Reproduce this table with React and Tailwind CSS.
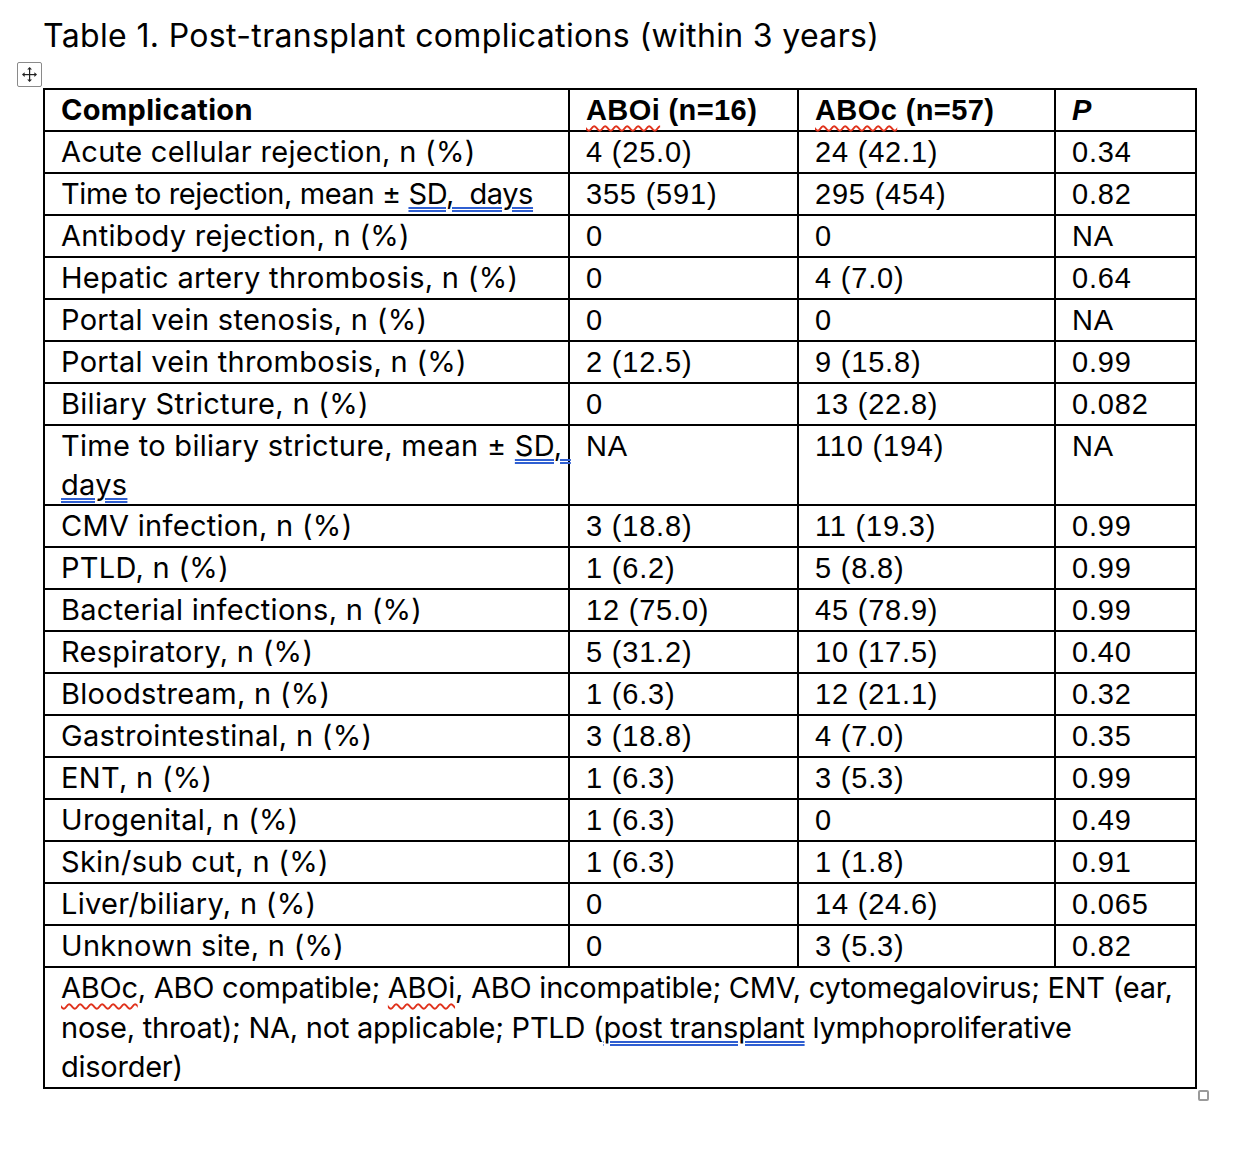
import React from 'react'

const blue = 'underline decoration-double decoration-[#2f5fd1] decoration-2 underline-offset-[3px]'
const squiggle = 'underline decoration-wavy decoration-[#e0321c] decoration-[1.5px] underline-offset-[5px]'

const rows = [
  ['Acute cellular rejection, n (%)', '4 (25.0)', '24 (42.1)', '0.34'],
  [<span className="whitespace-nowrap tracking-[-0.4px]">Time to rejection, mean ± <span className={blue}>SD,&nbsp; days</span></span>, '355 (591)', '295 (454)', '0.82'],
  ['Antibody rejection, n (%)', '0', '0', 'NA'],
  ['Hepatic artery thrombosis, n (%)', '0', '4 (7.0)', '0.64'],
  ['Portal vein stenosis, n (%)', '0', '0', 'NA'],
  ['Portal vein thrombosis, n (%)', '2 (12.5)', '9 (15.8)', '0.99'],
  ['Biliary Stricture, n (%)', '0', '13 (22.8)', '0.082'],
  [<div className="leading-[39px]"><span className="whitespace-nowrap">Time to biliary stricture, mean ± <span className={blue}>SD,&nbsp;</span></span><br /><span className={blue}>days</span></div>, 'NA', '110 (194)', 'NA'],
  ['CMV infection, n (%)', '3 (18.8)', '11 (19.3)', '0.99'],
  ['PTLD, n (%)', '1 (6.2)', '5 (8.8)', '0.99'],
  ['Bacterial infections, n (%)', '12 (75.0)', '45 (78.9)', '0.99'],
  ['Respiratory, n (%)', '5 (31.2)', '10 (17.5)', '0.40'],
  ['Bloodstream, n (%)', '1 (6.3)', '12 (21.1)', '0.32'],
  ['Gastrointestinal, n (%)', '3 (18.8)', '4 (7.0)', '0.35'],
  ['ENT, n (%)', '1 (6.3)', '3 (5.3)', '0.99'],
  ['Urogenital, n (%)', '1 (6.3)', '0', '0.49'],
  ['Skin/sub cut, n (%)', '1 (6.3)', '1 (1.8)', '0.91'],
  ['Liver/biliary, n (%)', '0', '14 (24.6)', '0.065'],
  ['Unknown site, n (%)', '0', '3 (5.3)', '0.82'],
]

function MoveHandle(){
  return (
    <div className="absolute left-[17px] top-[62px] w-[25px] h-[25px] border border-[#8a8a8a] rounded-[2px] bg-white flex items-center justify-center">
      <svg width="17" height="17" viewBox="0 0 17 17" fill="#222">
        <rect x="8" y="3" width="1.2" height="11" />
        <rect x="3" y="8" width="11" height="1.2" />
        <path d="M8.6 1 L11 3.6 L6.2 3.6 Z" />
        <path d="M8.6 16 L11 13.4 L6.2 13.4 Z" />
        <path d="M1 8.6 L3.6 6.2 L3.6 11 Z" />
        <path d="M16 8.6 L13.4 6.2 L13.4 11 Z" />
      </svg>
    </div>
  )
}

export default function App(){
  const cell = 'border-2 border-black px-[16px] py-0 align-top'
  const lab = "font-['Inter',sans-serif] text-[29px] tracking-[0.3px]"
  const num = "font-['Liberation_Sans',Arial,sans-serif] text-[29px]"
  return (
    <div className="relative w-[1260px] h-[1164px] bg-white text-black">
      <div className="font-['Inter',sans-serif] absolute left-[43px] top-[14px] text-[32px] tracking-[0.35px] leading-[44px]">
        Table 1. Post-transplant complications (within 3 years)
      </div>
      <MoveHandle />
      <div className="pt-[88px] pl-[43px]">
        <table className="border-collapse table-fixed w-[1152px] leading-[40px]">
          <colgroup>
            <col className="w-[525px]" />
            <col className="w-[229px]" />
            <col className="w-[257px]" />
            <col className="w-[141px]" />
          </colgroup>
          <thead>
            <tr>
              <th className={`${cell} ${lab} text-left font-bold`}>Complication</th>
              <th className={`${cell} ${num} text-left font-bold tracking-[0.4px]`}><span className={squiggle}>ABOi</span> (n=16)</th>
              <th className={`${cell} ${num} text-left font-bold tracking-[0.4px]`}><span className={squiggle}>ABOc</span> (n=57)</th>
              <th className={`${cell} ${num} text-left font-bold italic`}>P</th>
            </tr>
          </thead>
          <tbody>
            {rows.map((r, i) => (
              <tr key={i}>
                <td className={`${cell} ${lab} pr-[2px]`}>{r[0]}</td>
                <td className={`${cell} ${num} tracking-[0.8px]`}>{r[1]}</td>
                <td className={`${cell} ${num} tracking-[0.8px]`}>{r[2]}</td>
                <td className={`${cell} ${num} tracking-[0.8px]`}>{r[3]}</td>
              </tr>
            ))}
            <tr>
              <td colSpan={4} className={`${cell} font-['Inter',sans-serif] text-[29px] leading-[39.5px] tracking-[-0.25px] whitespace-nowrap`}>
                <span className={squiggle}>ABOc</span>, ABO compatible; <span className={squiggle}>ABOi</span>, ABO incompatible; CMV, cytomegalovirus; ENT (ear,<br />
                nose, throat); NA, not applicable; PTLD (<span className={blue}>post transplant</span> lymphoproliferative<br />
                disorder)
              </td>
            </tr>
          </tbody>
        </table>
      </div>
      <div className="absolute left-[1198px] top-[1090px] w-[11px] h-[11px] border-2 border-[#9a9a9a] rounded-[2px]" />
    </div>
  )
}
